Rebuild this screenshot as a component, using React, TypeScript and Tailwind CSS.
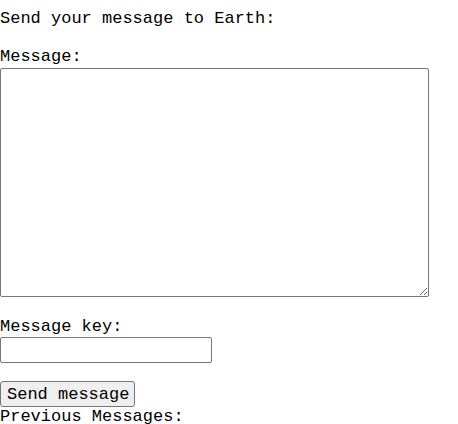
import React from "react";

export default function App() {
  return (
    <div className="bg-white text-black text-[17px] leading-[19px] min-h-[424px]" style={{ fontFamily: '"Liberation Mono", monospace' }}>
      <div className="pt-[9px]">Send your message to Earth:</div>
      <div className="mt-[19px]">Message:</div>
      <textarea
        className="block mt-[2px] w-[429px] h-[229px] border border-[#767676] rounded-[2px] p-[2px] bg-white outline-none"
        style={{ fontFamily: '"Liberation Mono", monospace' }}
      />
      <div className="mt-[20px]">Message key:</div>
      <input
        type="text"
        className="block mt-[1px] w-[212px] h-[26px] border border-[#767676] rounded-[2px] px-[2px] bg-white outline-none"
      />
      <button className="block mt-[18px] h-[26px] pl-[6px] pr-[5px] border border-[#767676] rounded-[3px] bg-[#efefef] text-black leading-[19px]">
        Send message
      </button>
      <div>Previous Messages:</div>
    </div>
  );
}
